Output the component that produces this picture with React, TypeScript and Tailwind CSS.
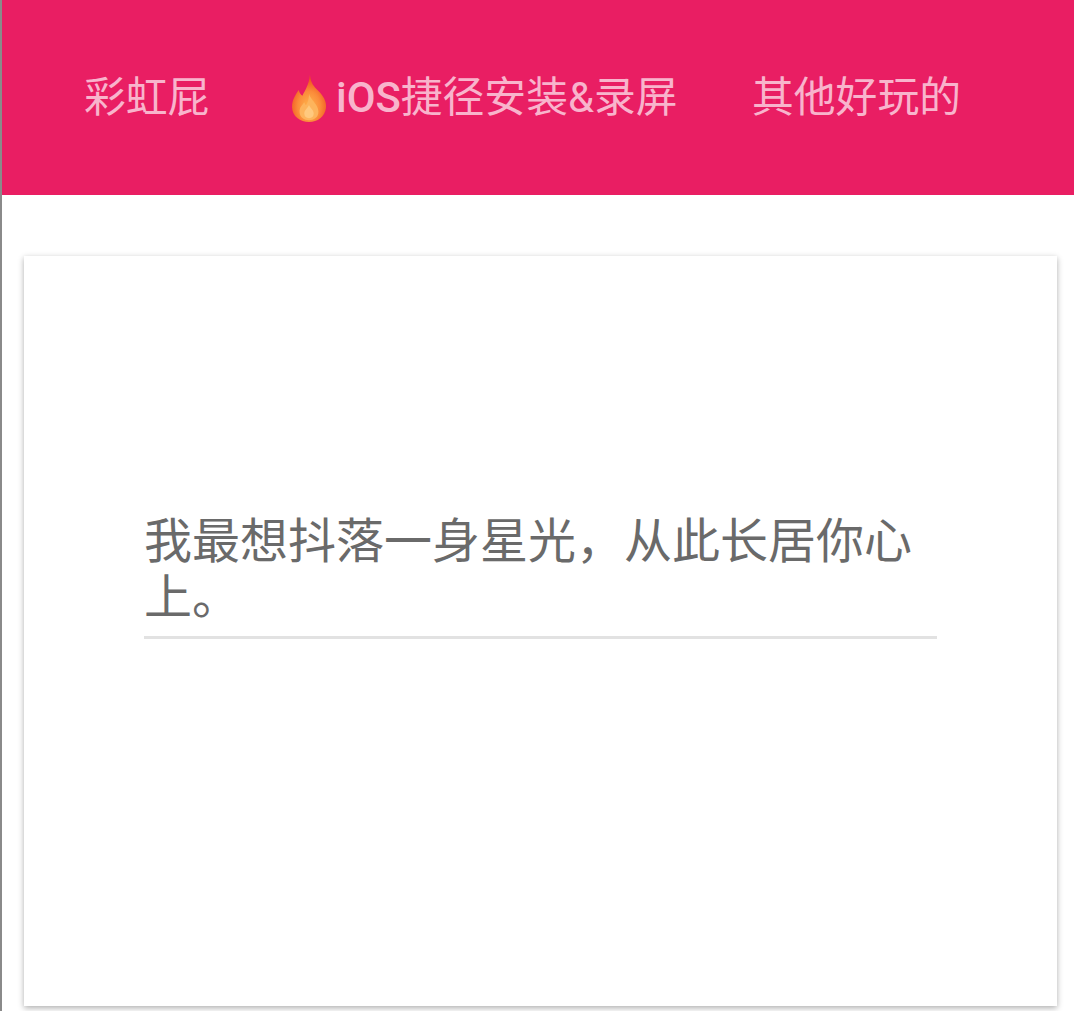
const App = () => {
  return (
    <div className="h-[1011px] overflow-hidden bg-white font-['Roboto','Noto_Sans_CJK_SC',sans-serif] border-l-2 border-[#8a8a8a]">
      <nav className="h-[195px] bg-[#e91e63] flex items-center pl-[82px] pt-[2px] text-[41.8px] text-[#f8b4cc]">
        <span className="w-[205px]">彩虹屁</span>
        <span className="flex items-center w-[463px]">
          <svg viewBox="0 0 40 52" className="w-[38px] h-[49px] ml-[1px] mr-[8px]">
            <defs>
              <radialGradient id="flame" cx="50%" cy="68%" r="60%">
                <stop offset="0%" stopColor="#ffb74d" />
                <stop offset="55%" stopColor="#fb8c3a" />
                <stop offset="100%" stopColor="#f0501e" />
              </radialGradient>
            </defs>
            <path d="M21 1c1 9 4 12 9 17 5 5 9 11 8 18-1 9-9 15-18 15S2 45 2 35c0-8 4-13 7-18 1 3 2 5 4 6 3-6 7-12 8-22z" fill="url(#flame)" />
            <path d="M20 21c1 6 10 11 10 19 0 6-5 9-10 9s-10-3-10-9c0-5 3-7 5-10 1 2 1 3 2 3 2-3 3-7 3-12z" fill="#fdb45c" />
            <path d="M20 33c1 3 5 5 5 9 0 3-2 5-5 5s-5-2-5-5c0-4 4-6 5-9z" fill="#ffc97e" />
          </svg>
          <span className="font-medium">iOS</span>捷径安装&amp;录屏
        </span>
        <span>其他好玩的</span>
      </nav>
      <main className="pt-[61px] pl-[22px] pr-[17px]">
        <section className="h-[750px] bg-white shadow-[0_2px_6px_rgba(0,0,0,0.32)] pt-[258px] px-[120px]">
          <div className="border-b-[3px] border-[#e2e2e2] pb-[10px] text-[48px] leading-[56px] text-[#6a6a6a]">
            我最想抖落一身星光，从此长居你心上。
          </div>
        </section>
      </main>
    </div>
  );
};

export default App;
